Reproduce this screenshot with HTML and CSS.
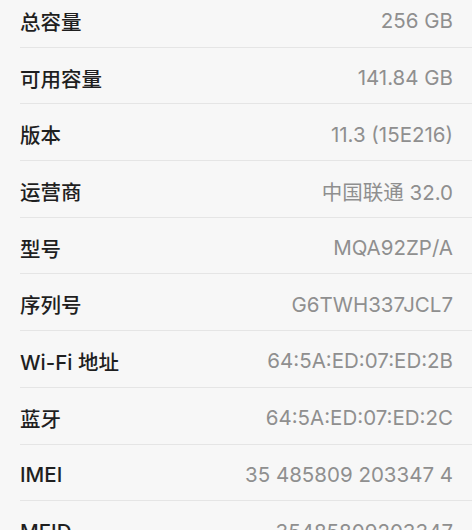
FILE: index.html
```html
<!DOCTYPE html>
<html lang="zh-CN">

<head>
    <meta charset="UTF-8">
    <title>关于本机</title>
    <link rel="stylesheet" href="styles.css">
</head>

<body>

    <!-- 设备信息列表 -->
    <ul class="info-list">
        <li class="info-row"><span class="label">总容量</span><span class="value">256 GB</span></li>
        <li class="info-row"><span class="label">可用容量</span><span class="value">141.84 GB</span></li>
        <li class="info-row"><span class="label">版本</span><span class="value">11.3 (15E216)</span></li>
        <li class="info-row"><span class="label">运营商</span><span class="value">中国联通 32.0</span></li>
        <li class="info-row"><span class="label">型号</span><span class="value">MQA92ZP/A</span></li>
        <li class="info-row"><span class="label">序列号</span><span class="value">G6TWH337JCL7</span></li>
        <li class="info-row"><span class="label">Wi-Fi 地址</span><span class="value">64:5A:ED:07:ED:2B</span></li>
        <li class="info-row"><span class="label">蓝牙</span><span class="value">64:5A:ED:07:ED:2C</span></li>
        <li class="info-row"><span class="label">IMEI</span><span class="value">35 485809 203347 4</span></li>
        <li class="info-row"><span class="label">MEID</span><span class="value">35485809203347</span></li>
    </ul>

</body>

</html>
```

FILE: styles.css
```css
body {
    margin: 0;
    background-color: #f7f7f7;
    font-family: Inter, "Noto Sans CJK SC", sans-serif;
    overflow: hidden;
}

.info-list {
    list-style: none;
    margin: -9px 0 0 0;
    padding: 0 0 0 20px;
}

.info-row {
    box-sizing: border-box;
    height: 56.7px;
    display: flex;
    align-items: center;
    justify-content: space-between;
    padding: 4px 19px 0 0;
    border-bottom: 1px solid #e5e5e5;
    font-size: 20.5px;
}

.label {
    color: #1f1f1f;
    font-weight: 500;
}

.value {
    color: #8f8f8f;
}
```
